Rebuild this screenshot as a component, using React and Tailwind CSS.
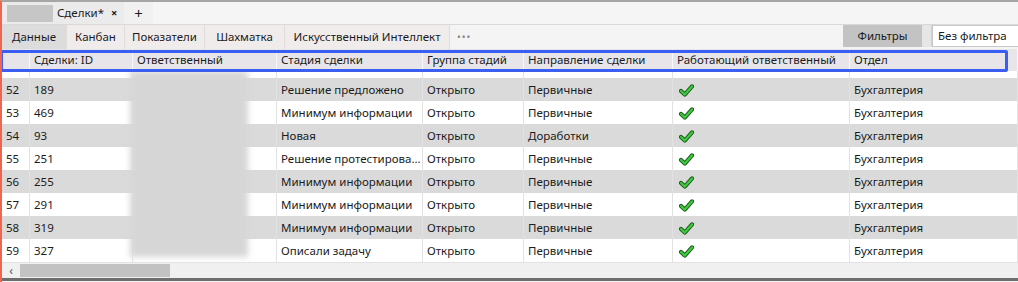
import React from 'react';

const COLS = [
  { key: 'n', w: 'w-[28px]' },
  { key: 'id', label: 'Сделки: ID', w: 'w-[103px]' },
  { key: 'resp', label: 'Ответственный', w: 'w-[144px]' },
  { key: 'stage', label: 'Стадия сделки', w: 'w-[146px]' },
  { key: 'group', label: 'Группа стадий', w: 'w-[101px]' },
  { key: 'dir', label: 'Направление сделки', w: 'w-[149px]' },
  { key: 'work', label: 'Работающий ответственный', w: 'w-[177px]' },
  { key: 'dept', label: 'Отдел', w: 'flex-1' },
];

const ROWS = [
  { n: 52, id: '189', stage: 'Решение предложено', group: 'Открыто', dir: 'Первичные', dept: 'Бухгалтерия' },
  { n: 53, id: '469', stage: 'Минимум информации', group: 'Открыто', dir: 'Первичные', dept: 'Бухгалтерия' },
  { n: 54, id: '93', stage: 'Новая', group: 'Открыто', dir: 'Доработки', dept: 'Бухгалтерия' },
  { n: 55, id: '251', stage: 'Решение протестирова...', group: 'Открыто', dir: 'Первичные', dept: 'Бухгалтерия' },
  { n: 56, id: '255', stage: 'Минимум информации', group: 'Открыто', dir: 'Первичные', dept: 'Бухгалтерия' },
  { n: 57, id: '291', stage: 'Минимум информации', group: 'Открыто', dir: 'Первичные', dept: 'Бухгалтерия' },
  { n: 58, id: '319', stage: 'Минимум информации', group: 'Открыто', dir: 'Первичные', dept: 'Бухгалтерия' },
  { n: 59, id: '327', stage: 'Описали задачу', group: 'Открыто', dir: 'Первичные', dept: 'Бухгалтерия' },
];

const TABS = [
  { label: 'Данные', w: 'w-[65px]' },
  { label: 'Канбан', w: 'w-[58px]' },
  { label: 'Показатели', w: 'w-[80px]' },
  { label: 'Шахматка', w: 'w-[80px]' },
  { label: 'Искусственный Интеллект', w: 'w-[165px]' },
];

function Check() {
  return (
    <svg width="15" height="13" viewBox="0 0 15 13">
      <path d="M2 7 L5.8 10.6 L13 2.4" fill="none" stroke="#1f5a1f" strokeWidth="4.2" strokeLinecap="round" strokeLinejoin="round" />
      <path d="M2 7 L5.8 10.6 L13 2.4" fill="none" stroke="#3dcc3d" strokeWidth="2.2" strokeLinecap="round" strokeLinejoin="round" />
    </svg>
  );
}

function Row({ row, gray, partial }) {
  return (
    <div className={`flex ${partial ? 'h-[7px]' : 'h-[23px]'} shrink-0 items-center ${gray ? 'bg-[#dadada]' : 'bg-white'}`}>
      {COLS.map((c) => (
        <div
          key={c.key}
          className={`${c.w} h-full flex items-center pl-[4px] border-r border-[#e2e2e2] whitespace-nowrap overflow-hidden shrink-0`}
        >
          {!partial && c.key === 'n' && row.n}
          {!partial && c.key === 'id' && row.id}
          {!partial && c.key === 'stage' && row.stage}
          {!partial && c.key === 'group' && row.group}
          {!partial && c.key === 'dir' && row.dir}
          {!partial && c.key === 'work' && <span className="pl-[2px] pt-[1px]"><Check /></span>}
          {!partial && c.key === 'dept' && row.dept}
        </div>
      ))}
    </div>
  );
}

export default function App() {
  return (
    <div
      className="relative w-[1018px] h-[282px] overflow-hidden flex flex-col bg-[#f3f3f3] border-l-2 border-[#f0654f] border-t-2 border-t-[#a6a6a6] text-[11.5px] text-[#1b1b1b]"
      style={{ fontFamily: '"Segoe UI", "Noto Sans", sans-serif' }}
    >
      {/* document tabs */}
      <div className="flex h-[23px] items-stretch border-b border-[#d9d9d9] bg-[#f5f5f5]">
        <div className="flex items-center w-[122px] bg-[#ebebeb] pl-[5px]">
          <div className="w-[46px] h-[17px] bg-[#c6c6c6] blur-[0.5px]" />
          <span className="ml-[4px]">Сделки*</span>
          <span className="ml-[7px] text-[11px] font-bold">×</span>
        </div>
        <div className="w-[29px] flex items-center justify-center bg-[#f1f1f1] text-[15px]">+</div>
      </div>

      {/* view tabs */}
      <div className="flex h-[24px] items-stretch bg-[#f4f4f4]">
        {TABS.map((t, i) => (
          <div
            key={t.label}
            className={`${t.w} flex items-center justify-center whitespace-nowrap border-r border-[#e0dcdc] ${i === 0 ? 'bg-[#dcdcdc]' : 'bg-[#f0ecec]'}`}
          >
            {t.label}
          </div>
        ))}
        <div className="flex items-center pl-[7px] text-[#8a8a8a] tracking-[1px] text-[10px]">•••</div>
        <div className="flex-1" />
        <div className="w-[79px] h-[22px] flex items-center justify-center bg-[#c3c3c3]">Фильтры</div>
        <div className="w-[10px] h-[22px] bg-[#e6e6e6] border-r border-[#cfcfcf]" />
        <div className="w-[86px] h-[22px] flex items-center pl-[5px] bg-white border border-r-0 border-[#c9c9c9] whitespace-nowrap">
          Без фильтра
        </div>
      </div>

      {/* header */}
      <div className="flex h-[22px] shrink-0 items-center bg-[#e7e5e9]">
        {COLS.map((c) => (
          <div key={c.key} className={`${c.w} h-full flex items-center pl-[4px] border-r border-[#f7f7f7] whitespace-nowrap shrink-0`}>
            {c.label}
          </div>
        ))}
      </div>

      {/* body */}
      <div className="relative h-[191px] overflow-hidden flex flex-col bg-white">
        <Row row={{}} partial />
        {ROWS.map((r, i) => (
          <Row key={r.n} row={r} gray={i % 2 === 0} />
        ))}
        <div className="absolute left-[128px] top-0 w-[118px] h-[186px] bg-[#d6d6d6] blur-[3px]" />
      </div>

      {/* horizontal scrollbar */}
      <div className="flex h-[16px] items-center bg-[#f0f0f0] border-t border-[#e2e2e2]">
        <span className="w-[18px] text-center text-[12px] text-[#555] leading-none">‹</span>
        <div className="w-[150px] h-[13px] bg-[#c2c2c2]" />
      </div>
      <div className="h-[3px] bg-[#6e6e6e]" />

      {/* highlight frame */}
      <div className="absolute left-[-2px] top-[48px] w-[1008px] h-[22px] border-[3px] border-[#3b5ef2] rounded-[2px] pointer-events-none" />
    </div>
  );
}
